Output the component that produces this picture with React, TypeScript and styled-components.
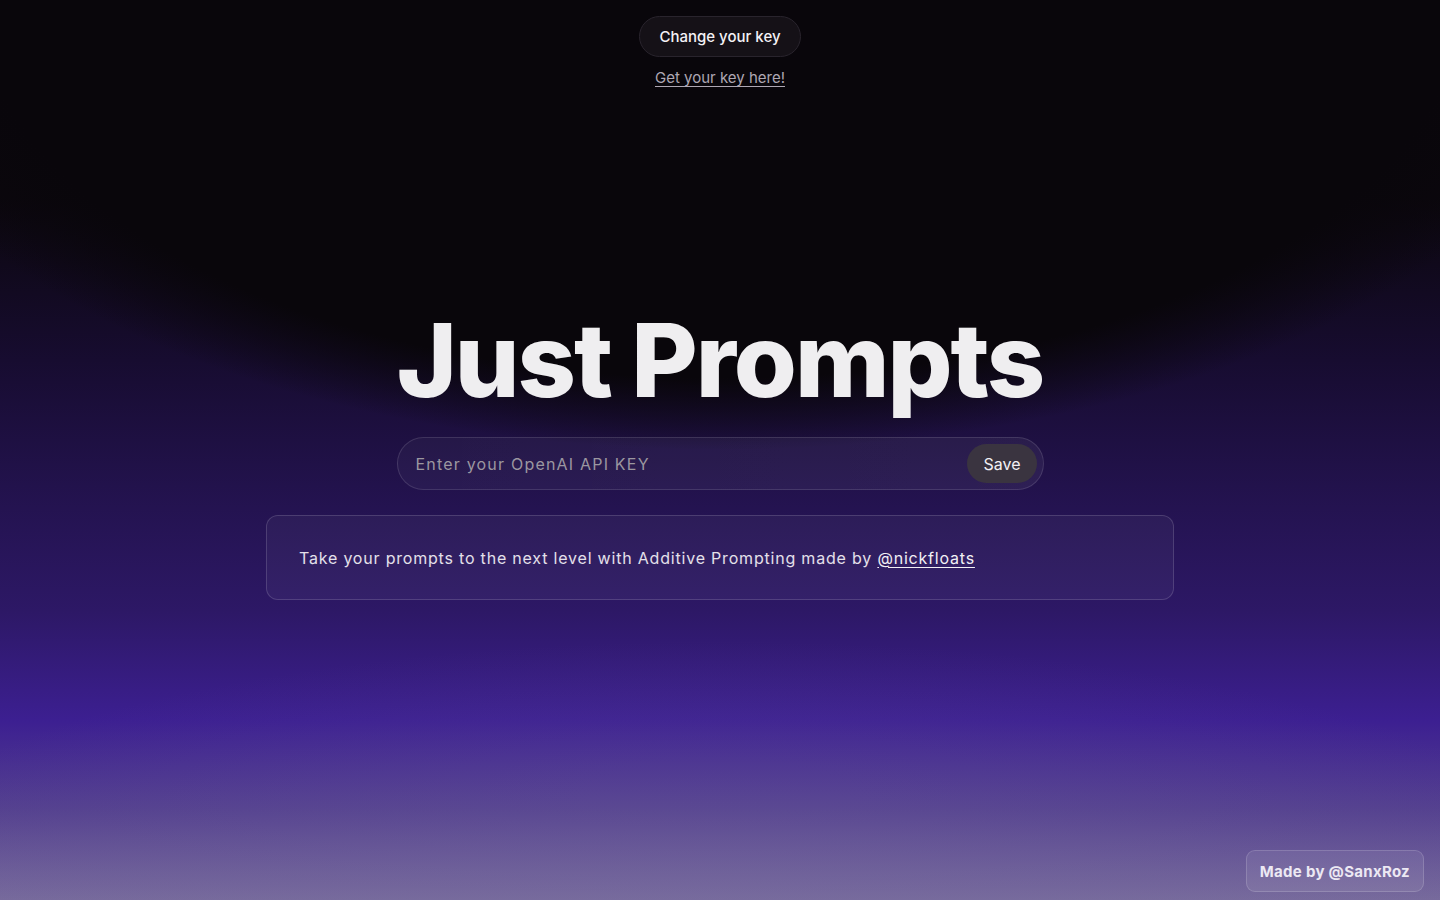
import { createGlobalStyle, styled } from 'styled-components';

const GlobalStyle = createGlobalStyle`
  * {
    box-sizing: border-box;
  }

  html, body {
    margin: 0;
    padding: 0;
    height: 100%;
  }

  body {
    font-family: Inter, "Noto Sans", sans-serif;
    color: #f0eef2;
    background-color: #0b070d;
  }

  #root {
    min-height: 100vh;
  }
`;

export default function App() {
  return (
    <>
      <GlobalStyle />
      <St.Page>
        <St.TopBar>
          <St.KeyButton>Change your key</St.KeyButton>
          <St.KeyLink href="#">Get your key here!</St.KeyLink>
        </St.TopBar>

        <St.Main>
          <St.Title>Just Prompts</St.Title>

          <St.KeyForm onSubmit={(e) => e.preventDefault()}>
            <St.KeyInput placeholder="Enter your OpenAI API KEY" />
            <St.SaveButton type="submit">Save</St.SaveButton>
          </St.KeyForm>

          <St.InfoCard>
            <St.InfoText>
              Take your prompts to the next level with Additive Prompting made by{' '}
              <St.InfoLink href="#">@nickfloats</St.InfoLink>
            </St.InfoText>
          </St.InfoCard>
        </St.Main>

        <St.Credit>Made by @SanxRoz</St.Credit>
      </St.Page>
    </>
  );
}

const St = {
  Page: styled.div`
    position: relative;
    display: flex;
    flex-direction: column;
    align-items: center;
    min-height: 100vh;
    overflow: hidden;

    background:
      radial-gradient(ellipse 880px 450px at 50% 0%, #09060b 0%, #09060b 84%, rgba(9, 6, 11, 0) 100%),
      radial-gradient(ellipse 900px 260px at 50% 100%, rgba(120, 110, 160, 0.3) 0%, rgba(120, 110, 160, 0) 100%),
      linear-gradient(
        180deg,
        #0b070d 0%,
        #0b070d 22%,
        #170c30 40%,
        #22124c 54%,
        #2d1866 68%,
        #3c1f91 80%,
        #54408f 90%,
        #776a9c 100%
      );
  `,
  TopBar: styled.header`
    display: flex;
    flex-direction: column;
    align-items: center;
    gap: 11px;
    padding-top: 16px;
  `,
  KeyButton: styled.button`
    height: 41px;
    padding: 0 19px;

    font-family: Inter, "Noto Sans", sans-serif;
    font-size: 15px;
    font-weight: 500;
    color: #f4f2f6;

    background-color: #151117;
    border: 1px solid #29242d;
    border-radius: 999px;

    cursor: pointer;
  `,
  KeyLink: styled.a`
    font-size: 15px;
    color: #aea7b3;
    text-decoration: underline;
    text-underline-offset: 3px;
  `,
  Main: styled.main`
    display: flex;
    flex-direction: column;
    align-items: center;
    margin-top: 222px;
  `,
  Title: styled.h1`
    margin: 0;

    font-family: Inter, "Noto Sans", sans-serif;
    font-size: 102px;
    font-weight: 800;
    line-height: 1;
    letter-spacing: -2px;
    color: #efeef0;
  `,
  KeyForm: styled.form`
    display: flex;
    align-items: center;
    width: 647px;
    height: 53px;
    margin-top: 26px;
    padding: 0 6px 0 18px;

    background: linear-gradient(90deg, rgba(255, 255, 255, 0.035), rgba(255, 255, 255, 0.055));
    border: 1px solid rgba(255, 255, 255, 0.12);
    border-radius: 999px;
  `,
  KeyInput: styled.input`
    flex: 1;
    height: 100%;
    padding: 0;

    font-family: Inter, "Noto Sans", sans-serif;
    font-size: 16px;
    letter-spacing: 1.2px;
    color: #f0eef2;

    background: transparent;
    border: none;
    outline: none;

    &::placeholder {
      color: #9b97a0;
    }
  `,
  SaveButton: styled.button`
    height: 39px;
    padding: 0 16px;

    font-family: Inter, "Noto Sans", sans-serif;
    font-size: 16px;
    color: #f2f0f4;

    background-color: #3a3440;
    border: none;
    border-radius: 999px;

    cursor: pointer;
  `,
  InfoCard: styled.section`
    display: flex;
    align-items: center;
    width: 908px;
    height: 85px;
    margin-top: 25px;
    padding: 0 32px;

    background: rgba(255, 255, 255, 0.04);
    border: 1px solid rgba(255, 255, 255, 0.15);
    border-radius: 12px;
  `,
  InfoText: styled.p`
    margin: 0;

    font-size: 16px;
    letter-spacing: 0.8px;
    color: #e4e0ea;
  `,
  InfoLink: styled.a`
    color: #f2f0f4;
    text-decoration: underline;
    text-underline-offset: 3px;
  `,
  Credit: styled.div`
    position: absolute;
    right: 16px;
    bottom: 8px;

    display: flex;
    align-items: center;
    height: 42px;
    padding: 0 13px;

    font-size: 15px;
    font-weight: 700;
    letter-spacing: 0.3px;
    color: #ece8f3;

    background: rgba(255, 255, 255, 0.08);
    border: 1px solid rgba(255, 255, 255, 0.16);
    border-radius: 9px;
  `
};
